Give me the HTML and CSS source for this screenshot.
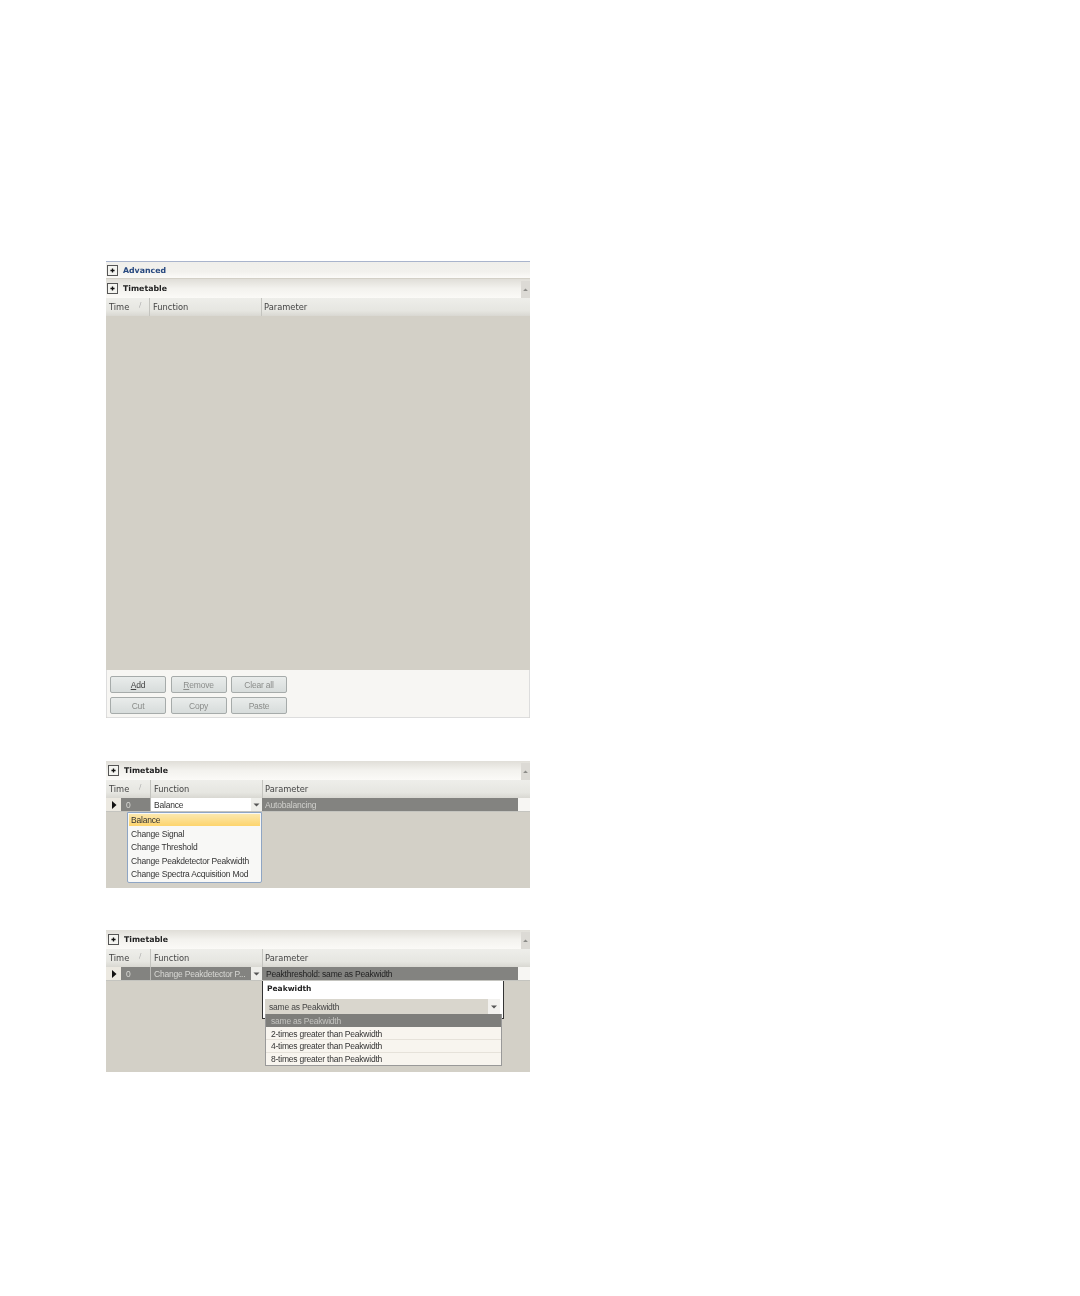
FILE: index.html
```html
<!DOCTYPE html>
<html lang="en">
<head>
<meta charset="utf-8">
<title>Timetable</title>
<link rel="stylesheet" href="styles.css">
</head>
<body>
<main class="page">
  <section class="panel panel-main">
    <div class="bar bar-advanced">
      <span class="plus"><svg viewBox="0 0 11 11"><path d="M3 5.500h5M5.500 3v5"/></svg></span>
      <span class="bar-title blue">Advanced</span>
    </div>
    <div class="bar">
      <span class="plus"><svg viewBox="0 0 11 11"><path d="M3 5.500h5M5.500 3v5"/></svg></span>
      <span class="bar-title">Timetable</span>
      <span class="scroll-up"><svg viewBox="0 0 9 18"><path d="M2 10.500 4.500 8 7 10.500z"/></svg></span>
    </div>
    <div class="grid-head">
      <span class="col col-time">Time<i class="sort">∕</i></span>
      <span class="col col-func">Function</span>
      <span class="col col-param">Parameter</span>
    </div>
    <div class="grid-body grid-body-main"></div>
    <div class="toolbar">
      <div class="btn-row">
        <span class="btn strong"><u>A</u>dd</span>
        <span class="btn"><u>R</u>emove</span>
        <span class="btn">Clear all</span>
      </div>
      <div class="btn-row">
        <span class="btn">Cut</span>
        <span class="btn">Copy</span>
        <span class="btn">Paste</span>
      </div>
    </div>
  </section>

  <section class="panel panel-second panel-editing">
    <div class="bar">
      <span class="plus"><svg viewBox="0 0 11 11"><path d="M3 5.500h5M5.500 3v5"/></svg></span>
      <span class="bar-title">Timetable</span>
      <span class="scroll-up"><svg viewBox="0 0 9 18"><path d="M2 10.500 4.500 8 7 10.500z"/></svg></span>
    </div>
    <div class="grid-head">
      <span class="col col-time">Time<i class="sort">∕</i></span>
      <span class="col col-func">Function</span>
      <span class="col col-param">Parameter</span>
    </div>
    <div class="row">
      <span class="row-mark"><svg viewBox="0 0 8 10"><path d="M2 1 6.500 5 2 9z"/></svg></span>
      <span class="cell cell-time">0</span>
      <span class="cell cell-func editing">Balance<span class="drop"><svg viewBox="0 0 9 9"><path d="M1.500 3.500h6L4.500 6.500z"/></svg></span></span>
      <span class="cell cell-param light">Autobalancing</span>
      <span class="row-end"></span>
    </div>
    <div class="grid-body">
      <ul class="menu">
        <li class="selected">Balance</li>
        <li>Change Signal</li>
        <li>Change Threshold</li>
        <li>Change Peakdetector Peakwidth</li>
        <li>Change Spectra Acquisition Mod</li>
      </ul>
    </div>
  </section>

  <section class="panel panel-third panel-editing">
    <div class="bar">
      <span class="plus"><svg viewBox="0 0 11 11"><path d="M3 5.500h5M5.500 3v5"/></svg></span>
      <span class="bar-title">Timetable</span>
      <span class="scroll-up"><svg viewBox="0 0 9 18"><path d="M2 10.500 4.500 8 7 10.500z"/></svg></span>
    </div>
    <div class="grid-head">
      <span class="col col-time">Time<i class="sort">∕</i></span>
      <span class="col col-func">Function</span>
      <span class="col col-param">Parameter</span>
    </div>
    <div class="row">
      <span class="row-mark"><svg viewBox="0 0 8 10"><path d="M2 1 6.500 5 2 9z"/></svg></span>
      <span class="cell cell-time">0</span>
      <span class="cell cell-func">Change Peakdetector P...<span class="drop"><svg viewBox="0 0 9 9"><path d="M1.500 3.500h6L4.500 6.500z"/></svg></span></span>
      <span class="cell cell-param shifted">Peakthreshold: same as Peakwidth</span>
      <span class="row-end"></span>
    </div>
    <div class="grid-body">
      <div class="editor">
        <div class="editor-title">Peakwidth</div>
        <div class="editor-select">same as Peakwidth<span class="drop"><svg viewBox="0 0 9 9"><path d="M1.500 3.500h6L4.500 6.500z"/></svg></span></div>
      </div>
      <ul class="options">
        <li class="current">same as Peakwidth</li>
        <li>2-times greater than Peakwidth</li>
        <li>4-times greater than Peakwidth</li>
        <li>8-times greater than Peakwidth</li>
      </ul>
    </div>
  </section>
</main>
</body>
</html>
```

FILE: styles.css
```css
* { box-sizing: border-box; }

html, body { margin: 0; padding: 0; background: #fff; }

body {
  font-family: "Liberation Sans", Arial, sans-serif;
  font-size: 8.500px;
  letter-spacing: -0.200px;
  color: #333;
  white-space: nowrap;
}

.page {
  height: 1296px;
  padding: 261px 0 0 106px;
  overflow: hidden;
}

.panel {
  width: 424px;
  display: flex;
  flex-direction: column;
  background: #d3d0c7;
  filter: blur(0.3px);
}

.panel-main { height: 457px; border-top: 1px solid #a9b4cc; }
.panel-second { height: 127px; margin-top: 43px; }
.panel-third { height: 142px; margin-top: 42px; }

.bar {
  flex: none;
  height: 19px;
  display: flex;
  align-items: center;
  position: relative;
  padding-left: 1px;
  background: linear-gradient(#e0ded8, #f3f2ee 50%, #fbfaf7);
}

.panel-editing .bar { padding-left: 2px; }

.bar-advanced {
  height: 16px;
  margin-bottom: 1px;
  background: linear-gradient(#f0efeb, #f2f1ed 60%, #fcfbf8);
}

.plus {
  width: 11px;
  height: 11px;
  border: 1px solid #555;
  background: #f4f4f0;
  display: flex;
}

.plus svg { width: 100%; height: 100%; }
.plus path { stroke: #111; stroke-width: 1.6; fill: none; }

.bar-title {
  margin-left: 5px;
  font-family: "DejaVu Sans", sans-serif;
  font-size: 7.800px;
  font-weight: 700;
  letter-spacing: 0;
  color: #222;
}

.bar-title.blue { color: #27487f; }

.scroll-up {
  position: absolute;
  right: 0;
  top: 2px;
  width: 9px;
  height: 17px;
  background: #dcdad5;
  display: flex;
}

.scroll-up svg { width: 100%; height: 100%; }
.scroll-up path { fill: #8c8c88; }

.grid-head {
  flex: none;
  height: 18px;
  display: flex;
  align-items: center;
  background: linear-gradient(#eeeeea, #e6e6e1 70%, #d9d8d2);
  font-family: "DejaVu Sans", sans-serif;
  font-size: 8.300px;
  letter-spacing: 0;
  color: #444;
}

.col {
  height: 100%;
  display: flex;
  align-items: center;
  padding-left: 3px;
  border-right: 1px solid #c4c4bf;
}

.col-time { width: 44px; position: relative; }
.panel-editing .col-time { width: 45px; }
.col-func { width: 112px; }
.col-param { flex: 1; border-right: 0; padding-left: 2px; }

.sort {
  position: absolute;
  left: 33px;
  top: 3px;
  font-style: normal;
  font-size: 7px;
  color: #aaa;
}

.grid-body {
  flex: 1;
  position: relative;
  background: #d3d0c7;
}

.toolbar {
  flex: none;
  height: 48px;
  padding: 6px 0 0 3px;
  display: flex;
  flex-direction: column;
  gap: 4px;
  background: #f7f6f3;
  border: 1px solid #ddd;
  border-top: 0;
  border-radius: 0 0 2px 2px;
}

.btn-row { display: flex; gap: 4.500px; }

.btn {
  width: 56px;
  height: 17px;
  display: flex;
  align-items: center;
  justify-content: center;
  color: #8b8d8b;
  border: 1px solid #a6abaa;
  border-radius: 2px;
  background: linear-gradient(#e9eceb, #d7dcdb);
}

.btn.strong { color: #444; }

.row {
  flex: none;
  height: 14px;
  display: flex;
  background: #f3f2ee;
  border-bottom: 1px solid #c4c4bf;
}

.row-mark {
  width: 15px;
  display: flex;
  align-items: center;
  justify-content: center;
  background: #ece9e1;
}

.row-mark svg { width: 8px; height: 10px; }
.row-mark path { fill: #111; }

.cell {
  height: 100%;
  display: flex;
  align-items: center;
  background: #838380;
  color: #d8d8d4;
}

.cell-time { width: 29px; padding-left: 5px; }

.cell-func {
  width: 112px;
  padding-left: 3px;
  position: relative;
  border-left: 1px solid #b8b8b4;
}

.cell-func.editing { background: #fff; color: #333; }

.cell-param {
  width: 256px;
  padding-left: 3px;
  color: #222;
}

.cell-param.shifted { padding-left: 4px; }
.cell-param.light { color: #d0d0cc; }

.row-end { flex: 1; background: #f7f6f3; }

.drop {
  position: absolute;
  right: 0;
  top: 0;
  width: 11px;
  height: 100%;
  background: #eeeeea;
  display: flex;
  align-items: center;
}

.drop svg { width: 100%; height: 9px; }
.drop path { fill: #555; }

.menu {
  position: absolute;
  left: 21px;
  top: 0;
  width: 135px;
  margin: 0;
  padding: 1px;
  list-style: none;
  background: #f8f8f6;
  border: 1px solid #8ea5c4;
  border-radius: 0 0 2px 2px;
  color: #333;
}

.menu li {
  height: 13.500px;
  padding-left: 2px;
  display: flex;
  align-items: center;
}

.menu li.selected {
  height: 12px;
  margin-bottom: 1px;
  background: linear-gradient(#fbe8ae, #fdd46c);
}

.editor {
  position: absolute;
  left: 156px;
  top: 0;
  width: 242px;
  height: 38px;
  background: #fff;
  border: 1px solid #333;
  border-top: 0;
}

.editor-title {
  height: 17px;
  padding: 3px 0 0 4px;
  font-family: "DejaVu Sans", sans-serif;
  font-size: 7.500px;
  font-weight: 700;
  letter-spacing: 0;
  color: #222;
}

.editor-select {
  height: 15px;
  margin: 1px 0 0 2px;
  width: 235px;
  padding-left: 4px;
  position: relative;
  display: flex;
  align-items: center;
  background: #d9d6cd;
  color: #444;
}

.editor-select .drop { width: 12px; background: #f2f1ee; }

.options {
  position: absolute;
  left: 159px;
  top: 33px;
  width: 237px;
  margin: 0;
  padding: 0;
  list-style: none;
  background: #f8f5ef;
  border: 1px solid #999;
  border-top: 0;
  color: #333;
  letter-spacing: -0.220px;
}

.options li {
  height: 13px;
  padding-left: 5px;
  display: flex;
  align-items: center;
  border-bottom: 1px solid #e6e2da;
}

.options li:nth-child(2) { padding-top: 1px; }
.options li:nth-child(3) { height: 12.500px; }
.options li:last-child { height: 12.500px; border-bottom: 0; }

.options li.current {
  background: #7e7e7b;
  color: #c4c4c0;
  border-bottom: 0;
}
```
